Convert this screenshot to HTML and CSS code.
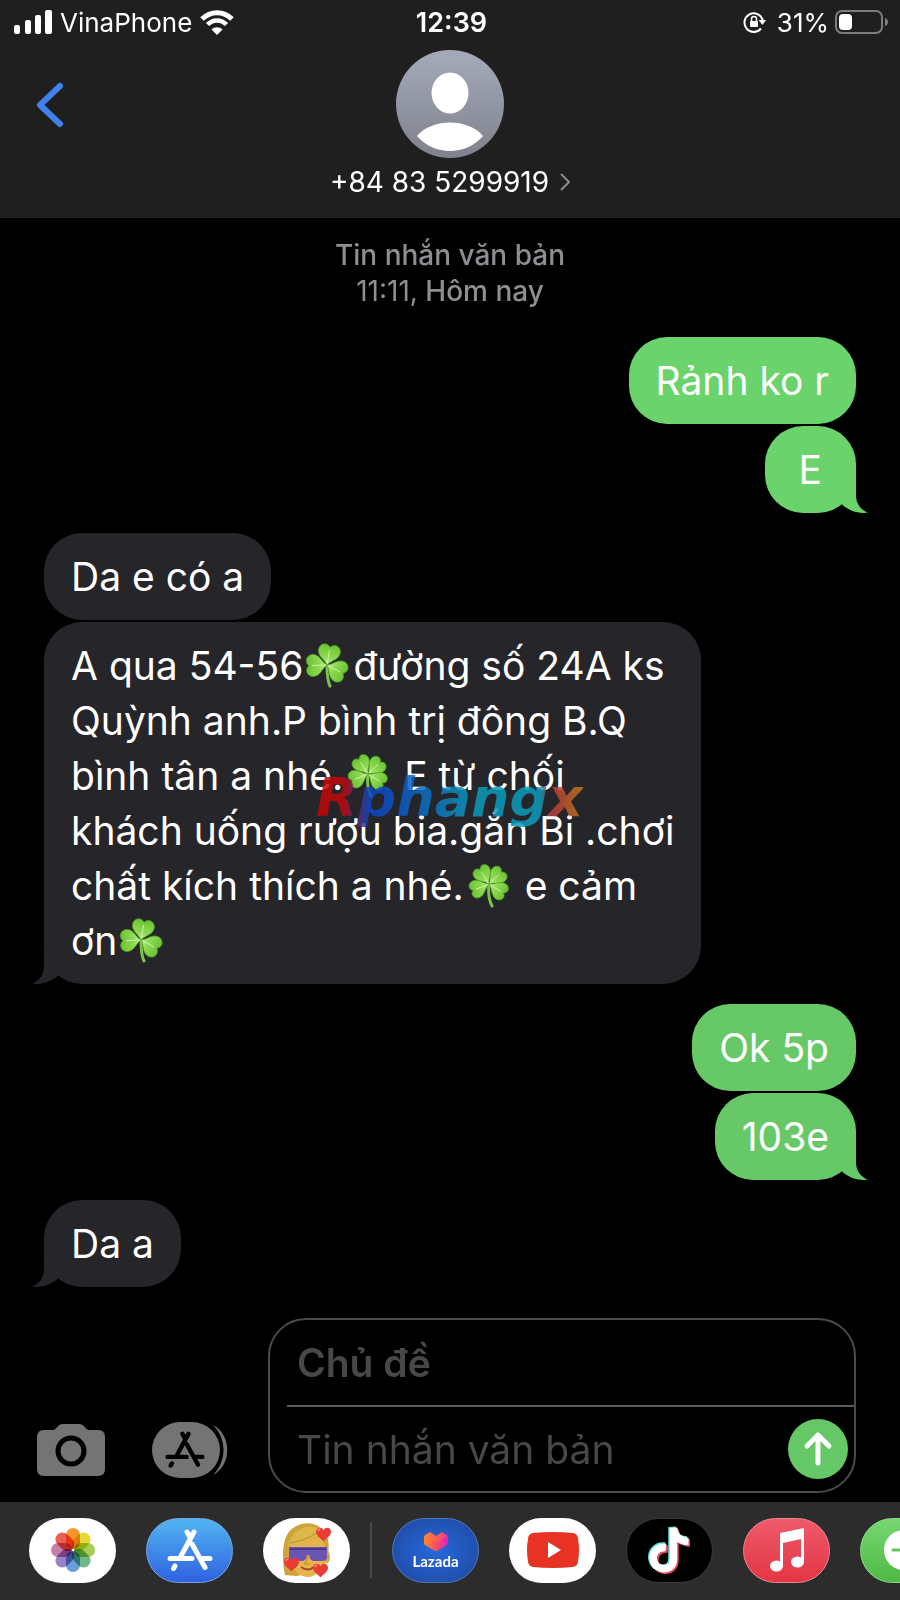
FILE: index.html
```html
<!DOCTYPE html>
<html lang="vi">
<head>
    <meta charset="UTF-8">
    <meta name="viewport" content="width=device-width, initial-scale=1.0">
    <title>Tin nhắn</title>
    <link rel="stylesheet" href="styles.css">
</head>
<body>
    <!-- shared shapes -->
    <svg class="defs" width="0" height="0" aria-hidden="true">
        <defs>
            <linearGradient id="leaf-fill" x1="0" y1="0" x2="0" y2="1">
                <stop offset="0" stop-color="#6cc234"/>
                <stop offset="0.6" stop-color="#8bd94f"/>
                <stop offset="1" stop-color="#c3ef94"/>
            </linearGradient>
            <g id="leaf">
                <path d="M0 0C-3-5-11-7-11-14C-11-20-4-23 0-18C4-23 11-20 11-14C11-7 3-5 0 0Z" fill="url(#leaf-fill)" stroke="#4da322" stroke-width="0.7"/>
                <path d="M0-1V-15" stroke="#d2f3aa" stroke-width="0.9"/>
            </g>
            <g id="leaf-small">
                <path d="M0 0C-2-5-9-8-9-14C-9-19-3-22 0-17C3-22 9-19 9-14C9-8 2-5 0 0Z" fill="url(#leaf-fill)" stroke="#4da322" stroke-width="0.7"/>
                <path d="M0-1V-14" stroke="#d2f3aa" stroke-width="0.9"/>
            </g>
            <symbol id="clover3" viewBox="0 0 46 46">
                <path d="M22 23C22 31 22 38 25 44" fill="none" stroke="#78c443" stroke-width="3" stroke-linecap="round"/>
                <use href="#leaf" transform="translate(22 23) rotate(10)"/>
                <use href="#leaf" transform="translate(22 23) rotate(-92)"/>
                <use href="#leaf" transform="translate(22 23) rotate(118)"/>
            </symbol>
            <symbol id="clover4" viewBox="0 0 46 46">
                <path d="M23 23C22 31 23 38 26 44" fill="none" stroke="#78c443" stroke-width="3" stroke-linecap="round"/>
                <use href="#leaf-small" transform="translate(23 22) rotate(-32)"/>
                <use href="#leaf-small" transform="translate(23 22) rotate(46)"/>
                <use href="#leaf-small" transform="translate(23 22) rotate(122)"/>
                <use href="#leaf-small" transform="translate(23 22) rotate(-112)"/>
            </symbol>
            <symbol id="tail" viewBox="0 0 40 40">
                <path d="M25 0V22C25 31 30 37 37 39.5C28 41 18 38 11 31.5L0 10Z"/>
            </symbol>
            <symbol id="store" viewBox="0 0 46 42">
                <g fill="none" stroke="currentColor" stroke-width="5" stroke-linecap="round">
                    <path d="M20 3L23.500 9M27 3L14 27M3 29.500H25M36 29.500H43M8 37L6.500 39.500"/>
                    <path d="M25 15L38 38.500"/>
                </g>
            </symbol>
            <symbol id="heart" viewBox="0 0 14 14">
                <path d="M7 13.500C5 11 0 8.500 0 4.500C0 0 5.500-.5 7 3C8.500-.5 14 0 14 4.500C14 8.500 9 11 7 13.500Z" fill="#ea3b35"/>
                <path d="M2 4C2 2.500 3 2 4 2" fill="none" stroke="#ff9c92"/>
            </symbol>
        </defs>
    </svg>

    <header class="header">
        <div class="status-bar">
            <div class="status-left">
                <svg width="38" height="24" viewBox="0 0 38 24" fill="#fff" aria-hidden="true">
                    <rect x="0" y="15" width="6" height="9" rx="2"/>
                    <rect x="11" y="10" width="6" height="14" rx="2"/>
                    <rect x="21" y="5" width="6" height="19" rx="2"/>
                    <rect x="31" y="0" width="7" height="24" rx="2"/>
                </svg>
                <span>VinaPhone</span>
                <svg width="34" height="25" viewBox="0 0 34 25" aria-hidden="true">
                    <path d="M2 9C10.500.5 23.500.5 32 9" fill="none" stroke="#fff" stroke-width="5"/>
                    <path d="M7.500 14.500C13 9 21 9 26.500 14.500" fill="none" stroke="#fff" stroke-width="4.500"/>
                    <path d="M11.500 19.500C14.500 16.500 19.500 16.500 22.500 19.500L17 25Z" fill="#fff"/>
                </svg>
            </div>
            <span class="status-time">12:39</span>
            <div class="status-right">
                <svg width="24" height="22" viewBox="0 0 24 22" aria-hidden="true">
                    <path d="M18 17.500A9.300 9.300 0 1 1 19.700 9" fill="none" stroke="#fff" stroke-width="2"/>
                    <path d="M15.500 9H23L19.500 14Z" fill="#fff"/>
                    <rect x="7" y="10" width="8" height="6" rx="1" fill="#fff"/>
                    <path d="M8.500 10V8a2.500 2.500 0 0 1 5 0V10" fill="none" stroke="#fff" stroke-width="1.500"/>
                </svg>
                <span class="battery-level">31%</span>
                <svg width="54" height="24" viewBox="0 0 54 24" aria-hidden="true">
                    <rect x="1" y="1" width="46" height="22" rx="6" fill="none" stroke="#7c7c7c" stroke-width="2"/>
                    <rect x="4" y="4" width="13" height="16" rx="4" fill="#fff"/>
                    <path d="M50 8C54 9 54 15 50 16Z" fill="#7c7c7c"/>
                </svg>
            </div>
        </div>
        <div class="contact-bar">
            <button class="back" aria-label="Quay lại">
                <svg width="28" height="46" viewBox="0 0 28 46">
                    <path d="M24 4L4 23L24 42" fill="none" stroke="#3f82ee" stroke-width="6" stroke-linecap="round" stroke-linejoin="round"/>
                </svg>
            </button>
            <a class="contact" href="#">
                <svg width="108" height="108" viewBox="0 0 108 108" aria-hidden="true">
                    <defs>
                        <linearGradient id="avatar-fill" x1="0" y1="0" x2="0" y2="1">
                            <stop offset="0" stop-color="#a5aaba"/>
                            <stop offset="1" stop-color="#7f828d"/>
                        </linearGradient>
                    </defs>
                    <circle cx="54" cy="54" r="54" fill="url(#avatar-fill)"/>
                    <ellipse cx="54" cy="43" rx="18.500" ry="20.500" fill="#fff"/>
                    <path d="M21 86C36 68 72 68 87 86C70 106 38 106 21 86Z" fill="#fff"/>
                </svg>
                <span class="contact-name">+84 83 5299919
                    <svg width="10" height="18" viewBox="0 0 10 18" aria-hidden="true">
                        <path d="M1 1L9 9L1 17" fill="none" stroke="#8a8a8e" stroke-width="2"/>
                    </svg>
                </span>
            </a>
        </div>
    </header>

    <main class="thread">
        <p class="timestamp">Tin nhắn văn bản<br><span>11:11,</span> Hôm nay</p>

        <div class="group sent">
            <div class="bubble">Rảnh ko r</div>
            <div class="bubble short">E<svg class="tail"><use href="#tail"/></svg></div>
        </div>

        <div class="group received">
            <div class="bubble">Da e có a</div>
            <div class="bubble">
                A qua 54-56<svg class="emoji" role="img" aria-label="☘️"><use href="#clover3"/></svg>đường số 24A ks<br>
                Quỳnh anh.P bình trị đông B.Q<br>
                bình tân a nhé.<svg class="emoji" role="img" aria-label="🍀"><use href="#clover4"/></svg> E từ chối<br>
                khách uống rượu bia.gắn Bi .chơi<br>
                chất kích thích a nhé.<svg class="emoji" role="img" aria-label="🍀"><use href="#clover4"/></svg> e cảm<br>
                ơn<svg class="emoji" role="img" aria-label="☘️"><use href="#clover3"/></svg>
                <svg class="tail"><use href="#tail"/></svg>
                <span class="watermark">Rphangx</span>
            </div>
        </div>

        <div class="group sent later">
            <div class="bubble">Ok 5p</div>
            <div class="bubble">103e<svg class="tail"><use href="#tail"/></svg></div>
        </div>

        <div class="group received">
            <div class="bubble">Da a<svg class="tail"><use href="#tail"/></svg></div>
        </div>
    </main>

    <form class="composer">
        <div class="tools">
            <button type="button" aria-label="Máy ảnh">
                <svg width="68" height="52" viewBox="0 0 68 52">
                    <path d="M7 6H16C20 6 20 0 26 0H42C48 0 48 6 52 6H61Q68 6 68 13V45Q68 52 61 52H7Q0 52 0 45V13Q0 6 7 6Z" fill="#747474"/>
                    <circle cx="34" cy="27" r="13" fill="none" stroke="#000" stroke-width="5"/>
                </svg>
            </button>
            <button type="button" aria-label="Ứng dụng">
                <svg width="76" height="56" viewBox="0 0 76 56">
                    <rect width="68" height="56" rx="28" fill="#747474"/>
                    <path d="M61 3C80 13 80 43 61 53C75 39 75 17 61 3Z" fill="#747474"/>
                    <use href="#store" x="13" y="9" width="40" height="37" color="#000"/>
                </svg>
            </button>
        </div>
        <div class="fields">
            <input class="subject" type="text" placeholder="Chủ đề" aria-label="Chủ đề">
            <div class="message-row">
                <input class="message" type="text" placeholder="Tin nhắn văn bản" aria-label="Tin nhắn văn bản">
                <button class="send" type="button" aria-label="Gửi">
                    <svg width="60" height="60" viewBox="0 0 60 60">
                        <path d="M30 44V17M19 27L30 16L41 27" fill="none" stroke="#fff" stroke-width="5" stroke-linecap="round" stroke-linejoin="round"/>
                    </svg>
                </button>
            </div>
        </div>
    </form>

    <nav class="dock" aria-label="Ứng dụng iMessage">
        <button class="app photos" aria-label="Ảnh">
            <svg width="46" height="46" viewBox="-23 -23 46 46">
                <rect x="-7" y="-22" width="14" height="21" rx="7" fill="#f5952b"/>
                <rect x="-7" y="-22" width="14" height="21" rx="7" fill="#e6d83a" transform="rotate(45)"/>
                <rect x="-7" y="-22" width="14" height="21" rx="7" fill="#a5cc53" transform="rotate(90)"/>
                <rect x="-7" y="-22" width="14" height="21" rx="7" fill="#72b98a" transform="rotate(135)"/>
                <rect x="-7" y="-22" width="14" height="21" rx="7" fill="#6a9ed8" transform="rotate(180)"/>
                <rect x="-7" y="-22" width="14" height="21" rx="7" fill="#9b82c4" transform="rotate(225)"/>
                <rect x="-7" y="-22" width="14" height="21" rx="7" fill="#c77faa" transform="rotate(270)"/>
                <rect x="-7" y="-22" width="14" height="21" rx="7" fill="#ec5d52" transform="rotate(315)"/>
            </svg>
        </button>
        <button class="app appstore" aria-label="App Store">
            <svg width="46" height="42"><use href="#store"/></svg>
        </button>
        <button class="app memoji" aria-label="Memoji">
            <svg width="50" height="56" viewBox="0 0 50 56">
                <path d="M3 53C0 40 0 22 5 13C11 1 30-3 40 7C48 14 47 24 46 36L38 50L14 54Z" fill="#d0a43c"/>
                <ellipse cx="45" cy="35" rx="3" ry="6" fill="#dba33c"/>
                <path d="M9 24C19 23 33 18 37 14C43 19 44 27 43 36C42 47 34 55 26 55C17 55 9 47 9 36Z" fill="#e6b34c"/>
                <path d="M6 24C10 7 26 0 40 8C35 18 21 24 6 24Z" fill="#dcb84a"/>
                <path d="M8 21C20 19 30 15 36 9" fill="none" stroke="#b78a2c"/>
                <path d="M7 25H45V35Q45 39 40 39H32Q28 39 27 33H25Q24 39 20 39H12Q7 39 7 35Z" fill="#6b55b3"/>
                <path d="M8 27H44" stroke="#4a3a8d" stroke-width="2"/>
                <path d="M26 34L23 42H28" fill="none" stroke="#cc9336" stroke-width="1.500"/>
                <path d="M19 45Q26 50 32 45" fill="none" stroke="#a54a2b" stroke-width="2"/>
                <use href="#heart" x="34" y="5" width="15" height="15"/>
                <use href="#heart" x="2" y="35" width="15" height="15"/>
                <use href="#heart" x="31" y="41" width="15" height="15"/>
            </svg>
        </button>
        <span class="divider"></span>
        <button class="app lazada">
            <svg width="24" height="19" viewBox="0 0 24 19" aria-hidden="true">
                <defs>
                    <linearGradient id="lazada-fill">
                        <stop offset="0" stop-color="#ff8a24"/>
                        <stop offset="0.5" stop-color="#f84f61"/>
                        <stop offset="1" stop-color="#e21fc4"/>
                    </linearGradient>
                </defs>
                <path d="M1 3L6 0L12 4L18 0L23 3Q24 4 24 5V11Q24 12 23 13L13 19H11L1 13Q0 12 0 11V5Q0 4 1 3Z" fill="url(#lazada-fill)"/>
                <path d="M1 4L12 11L23 4L18 0L12 4L6 0Z" fill="#ff7a3c" opacity="0.35"/>
            </svg>
            <span>Lazada</span>
        </button>
        <button class="app youtube" aria-label="YouTube">
            <svg width="52" height="36" viewBox="0 0 52 36">
                <path d="M6 1Q26-1 46 1Q51 2 51 7Q53 18 51 29Q51 34 46 35Q26 37 6 35Q1 34 1 29Q-1 18 1 7Q1 2 6 1Z" fill="#e83223"/>
                <path d="M21 10V26L34 18Z" fill="#fff"/>
            </svg>
        </button>
        <button class="app tiktok" aria-label="TikTok">
            <svg width="44" height="48" viewBox="0 0 44 48">
                <g fill="none" stroke-width="7.500">
                    <path d="M17 20C7 19 3 27 4 33C6 45 24 46 24 32V1C25 9 31 14 39 14" stroke="#67e2de"/>
                    <path d="M20 23C10 22 6 30 7 36C9 47 27 48 27 34V4C28 12 34 17 42 17" stroke="#e4485f"/>
                    <path d="M18 21.500C8 20.500 4 28.500 5.500 34.500C8 45.500 25.500 46 25.500 33V2C26.500 10 32 15.500 40.500 15.500" stroke="#fff"/>
                </g>
            </svg>
        </button>
        <button class="app music" aria-label="Nhạc">
            <svg width="36" height="44" viewBox="0 0 36 44" fill="#fff">
                <path d="M11 5L35 0V34H32V11L14 15V38H11Z"/>
                <ellipse cx="7.500" cy="38" rx="6.500" ry="5.500"/>
                <ellipse cx="28.500" cy="34" rx="6.500" ry="5.500"/>
            </svg>
        </button>
        <button class="app more" aria-label="Thêm">
            <svg width="40" height="40" viewBox="0 0 40 40">
                <circle cx="20" cy="20" r="20" fill="#fff"/>
                <path d="M9 20H31" stroke="#5fc957" stroke-width="3" stroke-linecap="round"/>
            </svg>
        </button>
    </nav>
</body>
</html>
```

FILE: styles.css
```css
* {
    box-sizing: border-box;
}
body {
    margin: 0;
    min-height: 100vh;
    display: flex;
    flex-direction: column;
    overflow-x: hidden;
    background: #000;
    color: #fff;
    font-family: Inter, "Liberation Sans", sans-serif;
}
button {
    padding: 0;
    border: 0;
    background: none;
    color: inherit;
    font-family: inherit;
}
svg {
    display: block;
    flex-shrink: 0;
}
.defs {
    position: absolute;
}

/* header */
.header {
    height: 218px;
    background: #1f1f1f;
}
.status-bar {
    display: grid;
    grid-template-columns: 1fr auto 1fr;
    align-items: center;
    height: 50px;
    padding: 0 11px 6px 14px;
    font-size: 26px;
}
.status-left,
.status-right {
    display: flex;
    align-items: center;
    gap: 8px;
}
.status-right {
    justify-content: flex-end;
    gap: 6px;
}
.battery-level {
    margin-left: 4px;
}
.status-time {
    font-size: 27px;
    font-weight: 600;
}
.contact-bar {
    display: grid;
    grid-template-columns: 1fr auto 1fr;
    padding: 0 36px;
}
.back {
    justify-self: start;
    align-self: start;
    margin-top: 32px;
}
.contact {
    display: flex;
    flex-direction: column;
    align-items: center;
    color: #fff;
    text-decoration: none;
}
.contact-name {
    display: flex;
    align-items: center;
    gap: 11px;
    margin-top: 7px;
    font-size: 28px;
    line-height: 34px;
}

/* messages */
.thread {
    flex: 1;
    display: flex;
    flex-direction: column;
    gap: 20px;
    padding: 19px 44px 0;
}
.timestamp {
    margin: 0 0 8px;
    color: #8e8e93;
    font-size: 28px;
    font-weight: 500;
    line-height: 36px;
    text-align: center;
}
.timestamp span {
    font-weight: 400;
}
.group {
    display: flex;
    flex-direction: column;
    align-items: flex-start;
    gap: 2px;
}
.bubble {
    position: relative;
    padding: 16px 27px;
    border-radius: 38px;
    background: #26252a;
    color: #fff;
    font-size: 39px;
    line-height: 55px;
    white-space: nowrap;
}
.sent {
    align-items: flex-end;
}
.sent .bubble {
    background: #6bd36b;
}
.later .bubble {
    background: #67c868;
}
.bubble.short {
    padding: 16px 34px;
}
.tail {
    position: absolute;
    right: -15px;
    bottom: 0;
    width: 40px;
    height: 40px;
    fill: #6bd36b;
}
.later .tail {
    fill: #67c868;
}
.received .tail {
    right: auto;
    left: -15px;
    fill: #26252a;
    transform: scaleX(-1);
}
.emoji {
    display: inline-block;
    width: 46px;
    height: 46px;
    margin: 0 2px;
    vertical-align: -8px;
}
.watermark {
    position: absolute;
    left: 272px;
    top: 144px;
    background: linear-gradient(90deg, #c00808 0, #c00808 10%, #0d47c4 20%, #0d54c4 30%, #0c9cbc 60%, #0c9cbc 84%, #b8383c 88%, #c07a1c 100%);
    background-clip: text;
    -webkit-background-clip: text;
    color: transparent;
    font: italic 700 54px/64px "DejaVu Sans", sans-serif;
    opacity: 0.85;
}

/* composer */
.composer {
    display: flex;
    align-items: flex-end;
    justify-content: space-between;
    gap: 40px;
    padding: 0 44px 9px 37px;
}
.tools {
    display: flex;
    align-items: center;
    gap: 47px;
    padding-bottom: 15px;
}
.fields {
    flex: 1;
    border: 2px solid #4a4a4a;
    border-radius: 38px;
}
.fields input {
    display: block;
    width: 100%;
    min-width: 0;
    padding: 0;
    border: 0;
    outline: 0;
    background: none;
    color: #fff;
    font-family: inherit;
    font-size: 39px;
}
.fields input::placeholder {
    color: #48484a;
    opacity: 1;
}
.fields .subject {
    width: calc(100% - 17px);
    height: 87px;
    margin-left: 17px;
    padding-left: 10px;
    border-bottom: 2px solid #5a5a5a;
    font-weight: 600;
}
.message-row {
    display: flex;
    align-items: center;
    height: 84px;
    padding: 0 6px 0 27px;
}
.send {
    flex-shrink: 0;
    border-radius: 50%;
    background: #65c766;
}

/* app strip */
.dock {
    display: flex;
    align-items: center;
    gap: 30px;
    height: 98px;
    padding: 0 0 2px 29px;
    overflow: hidden;
    background: #2c2c2c;
}
.app {
    display: flex;
    flex-direction: column;
    flex-shrink: 0;
    align-items: center;
    justify-content: center;
    width: 87px;
    height: 65px;
    border-radius: 33px;
    background: #fff;
}
.photos rect {
    mix-blend-mode: multiply;
}
.appstore {
    border: 1px solid #78a5dd;
    background: linear-gradient(#51b4f2, #2f62e0);
}
.divider {
    flex-shrink: 0;
    width: 2px;
    height: 56px;
    margin: 0 -10px;
    background: #484848;
}
.lazada {
    gap: 4px;
    border: 1px solid #5078b8;
    background: radial-gradient(#2668dc, #1f479c);
    font-family: Lato, sans-serif;
    font-size: 15px;
    font-weight: 700;
    line-height: 13px;
}
.tiktok {
    border: 1px solid #3c3c3c;
    background: #000;
}
.music {
    border: 1px solid #ea8a92;
    background: linear-gradient(#ee5a6b, #e43644);
}
.more {
    border: 1px solid #8edb86;
    background: linear-gradient(#76d772, #4fb944);
}
```
